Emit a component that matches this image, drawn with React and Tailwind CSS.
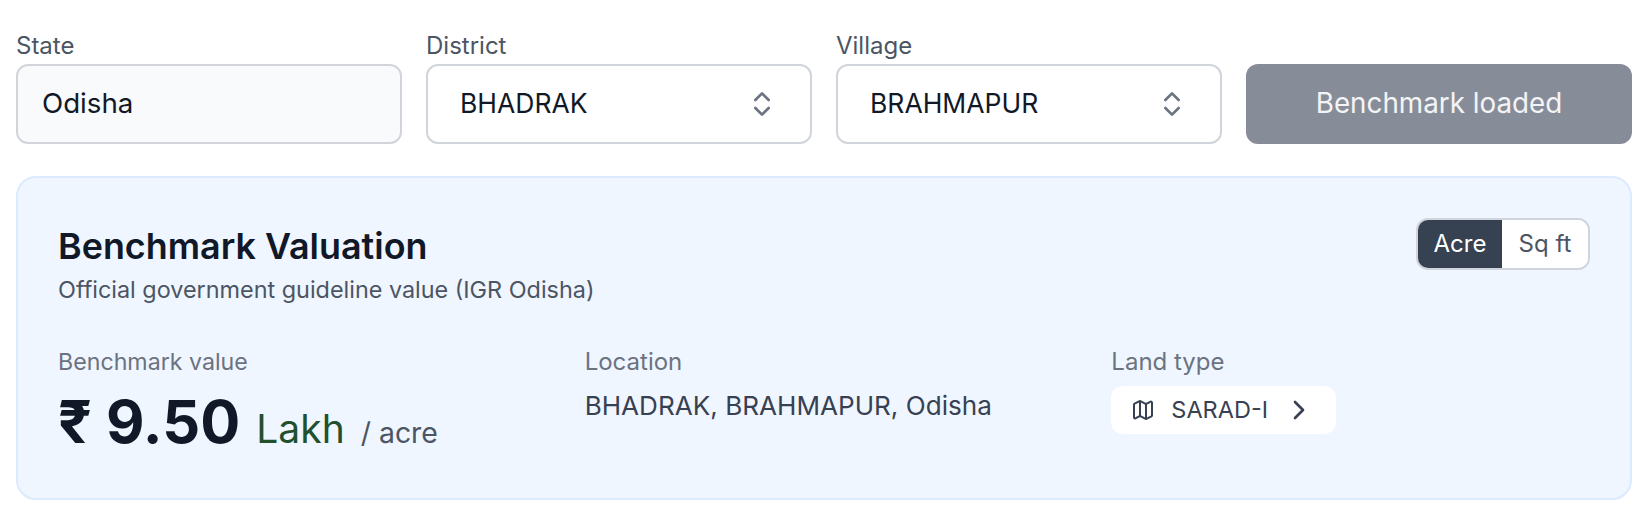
import { ChevronsUpDown, Map, ChevronRight } from "lucide-react";

function Field({ label, children }) {
  return (
    <div className="flex flex-col gap-[5px]">
      <label className="text-[24px] leading-[27px] text-[#4b5563]">{label}</label>
      {children}
    </div>
  );
}

function Select({ value }) {
  return (
    <div className="h-[80px] rounded-xl border-2 border-[#d1d5db] bg-white pl-[32px] pr-[32px] flex items-center justify-between text-[26.5px] text-[#111827]">
      <span>{value}</span>
      <ChevronsUpDown className="w-[32px] h-[32px] text-[#6b7280]" strokeWidth={2} />
    </div>
  );
}

export default function App() {
  return (
    <div className="pt-8 pl-4 pr-[14px] pb-4 font-['Inter',sans-serif] bg-white min-h-[520px]">
      <div className="grid grid-cols-4 gap-6 items-end">
        <Field label="State">
          <div className="h-[80px] rounded-xl border-2 border-[#d1d5db] bg-[#f9fafb] px-[24px] flex items-center text-[27.7px] text-[#111827]">Odisha</div>
        </Field>
        <Field label="District"><Select value="BHADRAK" /></Field>
        <Field label="Village"><Select value="BRAHMAPUR" /></Field>
        <button className="h-[80px] rounded-xl bg-[#878c99] text-white/90 text-[27.8px] flex items-center justify-center">Benchmark loaded</button>
      </div>

      <div className="mt-8 rounded-[20px] border-2 border-[#dbeafe] bg-[#eff6ff] px-10 pt-10 h-[324px]">
        <div className="flex justify-between items-start">
          <div>
            <h2 className="mt-[3px] text-[35.9px] leading-[50px] font-semibold text-[#111827]">Benchmark Valuation</h2>
            <p className="mt-[4px] text-[23.4px] leading-[30px] text-[#4b5563]">Official government guideline value (IGR Odisha)</p>
          </div>
          <div className="flex rounded-xl border-2 border-[#d1d5db] overflow-hidden text-[24px] h-[52px]">
            <span className="w-[84px] bg-[#364152] text-white flex items-center justify-center">Acre</span>
            <span className="w-[86px] bg-white text-[#4b5563] flex items-center justify-center">Sq ft</span>
          </div>
        </div>
        <div className="grid grid-cols-3 gap-12 mt-[41px]">
          <div>
            <div className="text-[23.2px] leading-[32px] text-[#6b7280]">Benchmark value</div>
            <div className="flex items-baseline mt-[11px] leading-[64px]">
              <span className="text-[59.4px] font-bold text-[#111827]">₹ 9.50</span>
              <span className="text-[39px] text-[#22502d] ml-[16px]">Lakh</span>
              <span className="text-[28.4px] text-[#4b5563] ml-[16px]">/ acre</span>
            </div>
          </div>
          <div>
            <div className="text-[24px] leading-[32px] text-[#6b7280]">Location</div>
            <div className="text-[26.1px] leading-[40px] text-[#374151] mt-[8px]">BHADRAK, BRAHMAPUR, Odisha</div>
          </div>
          <div>
            <div className="text-[24px] leading-[32px] text-[#6b7280]">Land type</div>
            <div className="mt-[8px] inline-flex items-center h-[48px] w-[225px] rounded-xl bg-white pl-[20px] text-[#374151] text-[23.5px]">
              <Map className="w-[24px] h-[24px]" strokeWidth={2} />
              <span className="ml-[16px]">SARAD-I</span>
              <ChevronRight className="w-[32px] h-[32px] ml-[15px]" strokeWidth={2} />
            </div>
          </div>
        </div>
      </div>
    </div>
  );
}
